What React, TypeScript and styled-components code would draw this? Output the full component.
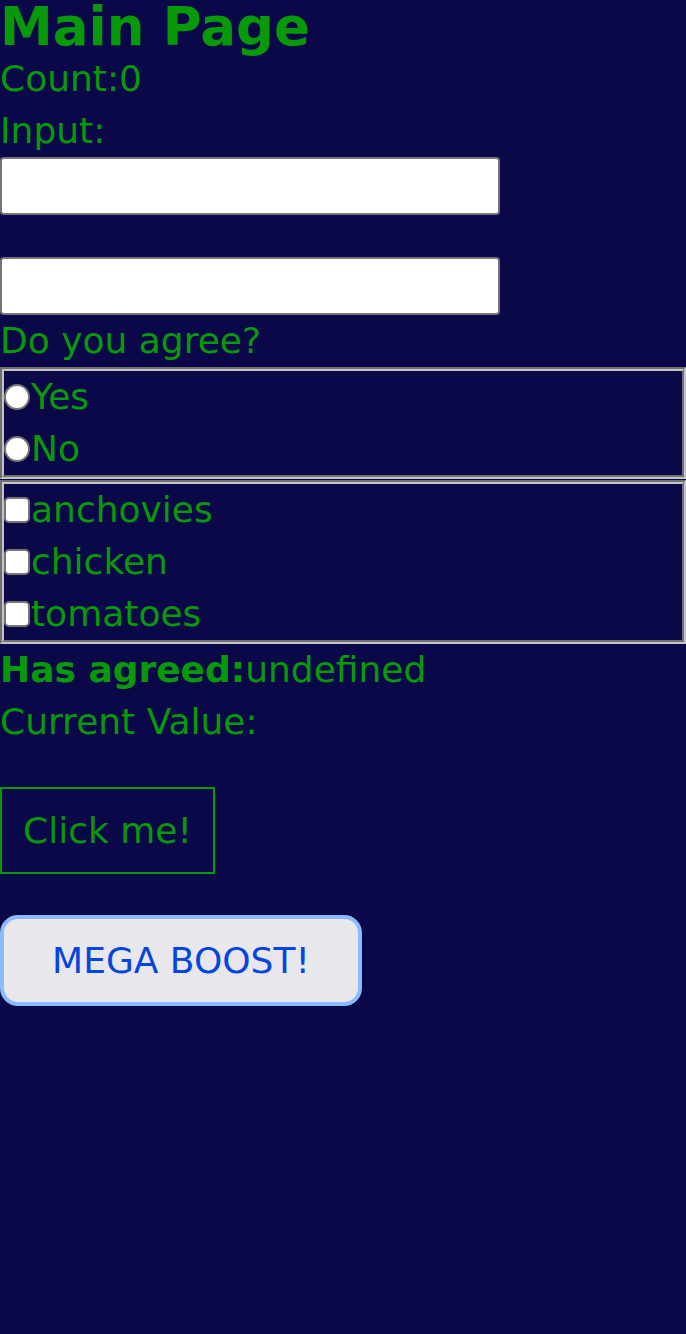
import styled, { createGlobalStyle } from "styled-components";
import { useState } from "react";

const GlobalStyle = createGlobalStyle`
  html, body {
    margin: 0;
    padding: 0;
    background-color: #0a0848;
  }
  body {
    font-family: "DejaVu Sans", "Liberation Sans", sans-serif;
    font-size: 36px;
    color: #089908;
    min-height: 1334px;
  }
`;

const Page = styled.div`
  display: flex;
  flex-direction: column;
  align-items: flex-start;
  width: 686px;
`;

const Title = styled.h1`
  margin: 0;
  font-size: 53px;
  font-weight: bold;
  line-height: 53px;
  height: 53px;
`;

const Line = styled.div`
  line-height: 52px;
  height: 52px;
  white-space: nowrap;
`;

const TextBox = styled.input`
  box-sizing: border-box;
  width: 500px;
  height: 58px;
  margin: 0;
  border: 2px solid #767676;
  border-radius: 4px;
  background: #ffffff;
  font: inherit;
  font-size: 26px;
  padding: 0 6px;
`;

const Spacer = styled.div<{ $h: number }>`
  height: ${(p) => p.$h}px;
`;

const Group = styled.fieldset<{ $gap?: number }>`
  box-sizing: border-box;
  width: 686px;
  margin: ${(p) => p.$gap ?? 0}px 0 0 0;
  padding: 0;
  border: 4px groove #c4c4c4;
  min-inline-size: 0;
`;

const Option = styled.label`
  display: flex;
  align-items: center;
  height: 52px;
  line-height: 52px;
  cursor: pointer;
`;

const Radio = styled.input`
  appearance: none;
  box-sizing: border-box;
  width: 26px;
  height: 26px;
  margin: 0 1px 0 0;
  border: 2px solid #767676;
  border-radius: 50%;
  background: #ffffff;
  &:checked {
    background: radial-gradient(circle, #1a73e8 40%, #ffffff 45%);
  }
`;

const Check = styled.input`
  appearance: none;
  box-sizing: border-box;
  width: 26px;
  height: 26px;
  margin: 0 1px 0 0;
  border: 2px solid #767676;
  border-radius: 5px;
  background: #ffffff;
  &:checked {
    background: #1a73e8;
  }
`;

const Strong = styled.b`
  font-weight: bold;
`;

const OutlineButton = styled.button`
  margin-top: 39px;
  height: 87px;
  padding: 0 21px;
  border: 2px solid #089908;
  background: transparent;
  color: #089908;
  font-family: inherit;
  font-size: 36px;
  cursor: pointer;
`;

const BoostButton = styled.button`
  margin-top: 41px;
  width: 362px;
  height: 91px;
  padding: 0;
  border: 4px solid #88bbff;
  border-radius: 18px;
  background: #e8e8ec;
  color: #0645e0;
  font-family: inherit;
  font-size: 36px;
  cursor: pointer;
`;

export default function App() {
  const [count, setCount] = useState(0);
  const [text, setText] = useState("");
  const [agreed, setAgreed] = useState<string | undefined>(undefined);
  const [toppings, setToppings] = useState<string[]>([]);

  const toggle = (t: string) =>
    setToppings((prev) =>
      prev.includes(t) ? prev.filter((x) => x !== t) : [...prev, t]
    );

  return (
    <>
      <GlobalStyle />
      <Page>
        <Title>Main Page</Title>
        <Line>Count:{count}</Line>
        <Line>Input:</Line>
        <TextBox value={text} onChange={(e) => setText(e.target.value)} />
        <Spacer $h={42} />
        <TextBox />
        <Line>Do you agree?</Line>
        <Group>
          {["Yes", "No"].map((o) => (
            <Option key={o}>
              <Radio
                type="radio"
                name="agree"
                checked={agreed === o}
                onChange={() => setAgreed(o)}
              />
              {o}
            </Option>
          ))}
        </Group>
        <Group $gap={1}>
          {["anchovies", "chicken", "tomatoes"].map((t) => (
            <Option key={t}>
              <Check
                type="checkbox"
                checked={toppings.includes(t)}
                onChange={() => toggle(t)}
              />
              {t}
            </Option>
          ))}
        </Group>
        <Line>
          <Strong>Has agreed:</Strong>
          {String(agreed)}
        </Line>
        <Line>Current Value:{text}</Line>
        <OutlineButton onClick={() => setCount((c) => c + 1)}>
          Click me!
        </OutlineButton>
        <BoostButton onClick={() => setCount((c) => c + 10)}>
          MEGA BOOST!
        </BoostButton>
      </Page>
    </>
  );
}
